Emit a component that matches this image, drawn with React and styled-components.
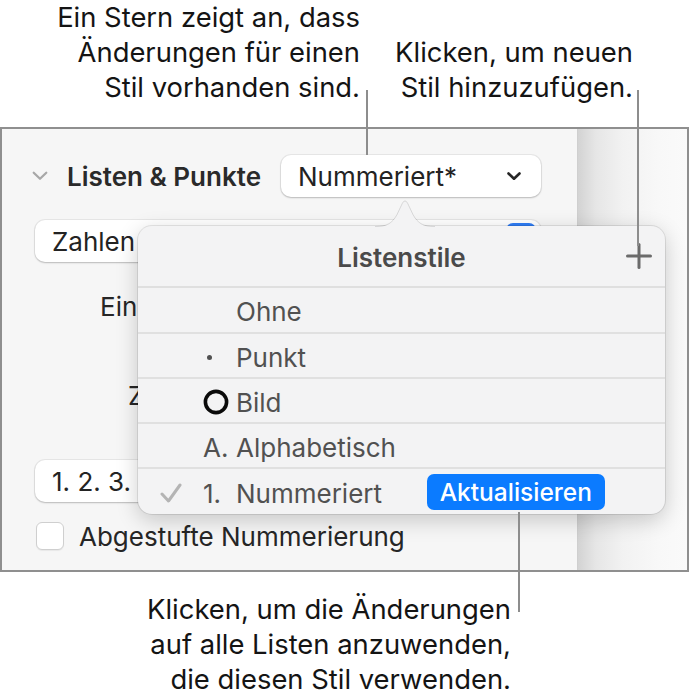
import React from "react";
import styled, { createGlobalStyle } from "styled-components";

const Global = createGlobalStyle`
  html, body { margin: 0; padding: 0; background: #ffffff; }
  body {
    font-family: Inter, "Liberation Sans", Arial, sans-serif;
    -webkit-font-smoothing: antialiased;
  }
  #root { width: 689px; height: 700px; }
`;

const Page = styled.div`
  position: relative;
  width: 689px;
  height: 700px;
  display: flex;
  flex-direction: column;
  overflow: hidden;
  background: #fff;
`;

const TopNotes = styled.div`
  height: 127px;
  display: flex;
  align-items: flex-start;
`;

const Note = styled.div`
  width: ${(p) => p.$w}px;
  margin-left: ${(p) => p.$ml || 0}px;
  margin-top: ${(p) => p.$mt || 0}px;
  text-align: right;
  font-size: 27.4px;
  line-height: 35px;
  color: #141414;
  white-space: nowrap;
`;

const Leader = styled.div`
  position: absolute;
  left: ${(p) => p.$x}px;
  top: ${(p) => p.$y}px;
  width: 2px;
  height: ${(p) => p.$h}px;
  background: #8d8d8d;
  z-index: 10;
`;

const Shot = styled.div`
  position: relative;
  height: 445px;
  box-sizing: border-box;
  border: 2px solid #8f8f8f;
  display: flex;
`;

const Inspector = styled.div`
  box-sizing: border-box;
  width: 576px;
  flex: none;
  background: #f6f6f6;
  border-right: 1px solid #cfcfcf;
  display: flex;
  flex-direction: column;
  padding: 26px 36px 0 33px;
  color: #262626;
  font-size: 26px;
`;

const DocArea = styled.div`
  flex: 1;
  background: linear-gradient(
    to right,
    #d3d3d3 0px,
    #e6e6e6 18px,
    #f2f2f2 45px,
    #f8f8f8 80px,
    #fafafa 100%
  );
`;

const HeaderRow = styled.div`
  height: 42px;
  display: flex;
  align-items: center;
  justify-content: space-between;
  margin-left: -3px;
`;

const SectionTitle = styled.div`
  display: flex;
  align-items: center;
  gap: 19px;
  font-weight: 600;
  color: #2a2a2a;
`;

const Row = styled.div`
  height: ${(p) => p.$h || 42}px;
  margin-top: ${(p) => p.$mt || 0}px;
  display: flex;
  align-items: center;
  gap: 15px;
`;

const Label = styled.div`
  margin-left: ${(p) => p.$ml || 0}px;
  white-space: nowrap;
`;

const PopupButton = styled.div`
  position: relative;
  box-sizing: border-box;
  width: ${(p) => p.$w}px;
  height: 42px;
  background: #ffffff;
  border-radius: 10px;
  box-shadow: 0 0 0 1px rgba(0, 0, 0, 0.06), 0 1px 2px rgba(0, 0, 0, 0.2);
  display: flex;
  align-items: center;
  justify-content: space-between;
  padding: 0 20px 0 17px;
  color: #232323;
  white-space: nowrap;
`;

const BlueArrows = styled.div`
  position: absolute;
  right: 5px;
  top: 3px;
  width: 30px;
  height: 36px;
  border-radius: 7px;
  background: #2f7df6;
`;

const Checkbox = styled.div`
  width: 28px;
  height: 28px;
  box-sizing: border-box;
  margin-left: 1px;
  border-radius: 6px;
  background: #fff;
  border: 1px solid #cfcfcf;
  box-shadow: 0 1px 1px rgba(0, 0, 0, 0.06);
`;

const Popover = styled.div`
  position: absolute;
  left: 136px;
  top: 97px;
  width: 527px;
  height: 288px;
  box-sizing: border-box;
  background: #f3f3f4;
  border-radius: 14px;
  box-shadow: 0 0 0 1px rgba(0, 0, 0, 0.09), 0 6px 22px rgba(0, 0, 0, 0.2);
  display: flex;
  flex-direction: column;
  z-index: 5;
`;

const Arrow = styled.svg`
  position: absolute;
  left: 237px;
  top: -27px;
  overflow: visible;
`;

const PopHeader = styled.div`
  height: 60px;
  border-bottom: 2px solid #dfdfdf;
  display: grid;
  grid-template-columns: 1fr auto 1fr;
  align-items: center;
`;

const PopTitle = styled.div`
  grid-column: 2;
  font-size: 26px;
  font-weight: 600;
  color: #4a4a4a;
  padding-top: 2px;
`;

const AddButton = styled.svg`
  grid-column: 3;
  justify-self: end;
  margin-right: 13px;
`;

const StyleRow = styled.div`
  box-sizing: border-box;
  height: ${(p) => p.$h}px;
  border-bottom: ${(p) => (p.$last ? "none" : "2px solid #e0e0e0")};
  display: grid;
  grid-template-columns: 43px 33px 1fr auto;
  align-items: center;
  padding: 3px 60px 0 22px;
  font-size: 26px;
  color: #515151;
`;

const Mark = styled.div`
  display: flex;
  align-items: center;
  white-space: nowrap;
`;

const Dot = styled.span`
  width: 5px;
  height: 5px;
  border-radius: 50%;
  background: #505050;
  margin-left: 4px;
`;

const UpdateButton = styled.div`
  height: 36px;
  margin-top: -3px;
  padding: 0 13px;
  border-radius: 7px;
  background: #0b7bff;
  color: #ffffff;
  font-size: 24.5px;
  font-weight: 500;
  display: flex;
  align-items: center;
  white-space: nowrap;
`;

const BottomNote = styled(Note)`
  margin-top: 20px;
`;

const ChevronDown = ({ color = "#262626", w = 14, sw = 2.6 }) => (
  <svg width={w} height={w * 0.6} viewBox="0 0 14 8.4" fill="none">
    <polyline
      points="1.5,1.5 7,6.8 12.5,1.5"
      stroke={color}
      strokeWidth={sw}
      strokeLinecap="round"
      strokeLinejoin="round"
    />
  </svg>
);

const styles = [
  { mark: null, label: "Ohne", h: 46 },
  { mark: "dot", label: "Punkt", h: 45 },
  { mark: "circle", label: "Bild", h: 45 },
  { mark: "A.", label: "Alphabetisch", h: 45 },
  { mark: "1.", label: "Nummeriert", checked: true, update: true, h: 45 },
];

function renderMark(mark) {
  if (mark === "dot") return <Dot />;
  if (mark === "circle")
    return (
      <svg width="26" height="26" viewBox="0 0 26 26">
        <circle cx="13" cy="13" r="10.6" fill="none" stroke="#0a0a0a" strokeWidth="3.6" />
      </svg>
    );
  return mark;
}

export default function App() {
  return (
    <Page>
      <Global />
      <TopNotes>
        <Note $w={360}>
          Ein Stern zeigt an, dass
          <br />
          Änderungen für einen
          <br />
          Stil vorhanden sind.
        </Note>
        <Note $w={253} $ml={20} $mt={35}>
          Klicken, um neuen
          <br />
          Stil hinzuzufügen.
        </Note>
      </TopNotes>

      <Shot>
        <Inspector>
          <HeaderRow>
            <SectionTitle>
              <ChevronDown color="#a8a8a8" w={16} sw={2} />
              Listen &amp; Punkte
            </SectionTitle>
            <PopupButton $w={260}>
              Nummeriert*
              <ChevronDown />
            </PopupButton>
          </HeaderRow>
          <Row $mt={23}>
            <PopupButton $w={506}>
              Zahlen &amp; Text
              <BlueArrows />
            </PopupButton>
          </Row>
          <Row $mt={23}>
            <Label $ml={65}>Einzug:</Label>
          </Row>
          <Row $mt={47}>
            <Label $ml={93}>Zahl:</Label>
          </Row>
          <Row $mt={44}>
            <PopupButton $w={506}>1. 2. 3. 4.</PopupButton>
          </Row>
          <Row $mt={20} $h={28}>
            <Checkbox />
            <Label>Abgestufte Nummerierung</Label>
          </Row>
        </Inspector>
        <DocArea />

        <Popover>
          <Arrow width="60" height="28" viewBox="0 0 60 28">
            <path
              d="M0 28 C12 28 17 25 22 16 L27.4 4.6 Q30 0 32.6 4.6 L38 16 C43 25 48 28 60 28 Z"
              fill="#f3f3f4"
            />
            <path
              d="M0 27.5 C12 27.5 17 24.5 22 15.6 L27.4 4.2 Q30 -0.4 32.6 4.2 L38 15.6 C43 24.5 48 27.5 60 27.5"
              fill="none"
              stroke="rgba(0,0,0,0.12)"
              strokeWidth="1"
            />
          </Arrow>
          <PopHeader>
            <PopTitle>Listenstile</PopTitle>
            <AddButton width="26" height="26" viewBox="0 0 26 26">
              <line x1="13" y1="1.5" x2="13" y2="24.5" stroke="#6b6b6b" strokeWidth="3" strokeLinecap="round" />
              <line x1="1.5" y1="13" x2="24.5" y2="13" stroke="#6b6b6b" strokeWidth="3" strokeLinecap="round" />
            </AddButton>
          </PopHeader>
          {styles.map((s, i) => (
            <StyleRow key={s.label} $h={s.h} $last={i === styles.length - 1}>
              <Mark>
                {s.checked && (
                  <svg width="22" height="20" viewBox="0 0 22 20">
                    <polyline
                      points="2,11 8.5,18 20,2"
                      fill="none"
                      stroke="#b4b4b4"
                      strokeWidth="3"
                      strokeLinecap="round"
                      strokeLinejoin="round"
                    />
                  </svg>
                )}
              </Mark>
              <Mark>{renderMark(s.mark)}</Mark>
              <Label>{s.label}</Label>
              {s.update ? <UpdateButton>Aktualisieren</UpdateButton> : <span />}
            </StyleRow>
          ))}
        </Popover>
      </Shot>

      <BottomNote $w={511}>
        Klicken, um die Änderungen
        <br />
        auf alle Listen anzuwenden,
        <br />
        die diesen Stil verwenden.
      </BottomNote>

      <Leader $x={366} $y={90} $h={65} />
      <Leader $x={637} $y={90} $h={156} />
      <Leader $x={518} $y={512} $h={100} />
    </Page>
  );
}
